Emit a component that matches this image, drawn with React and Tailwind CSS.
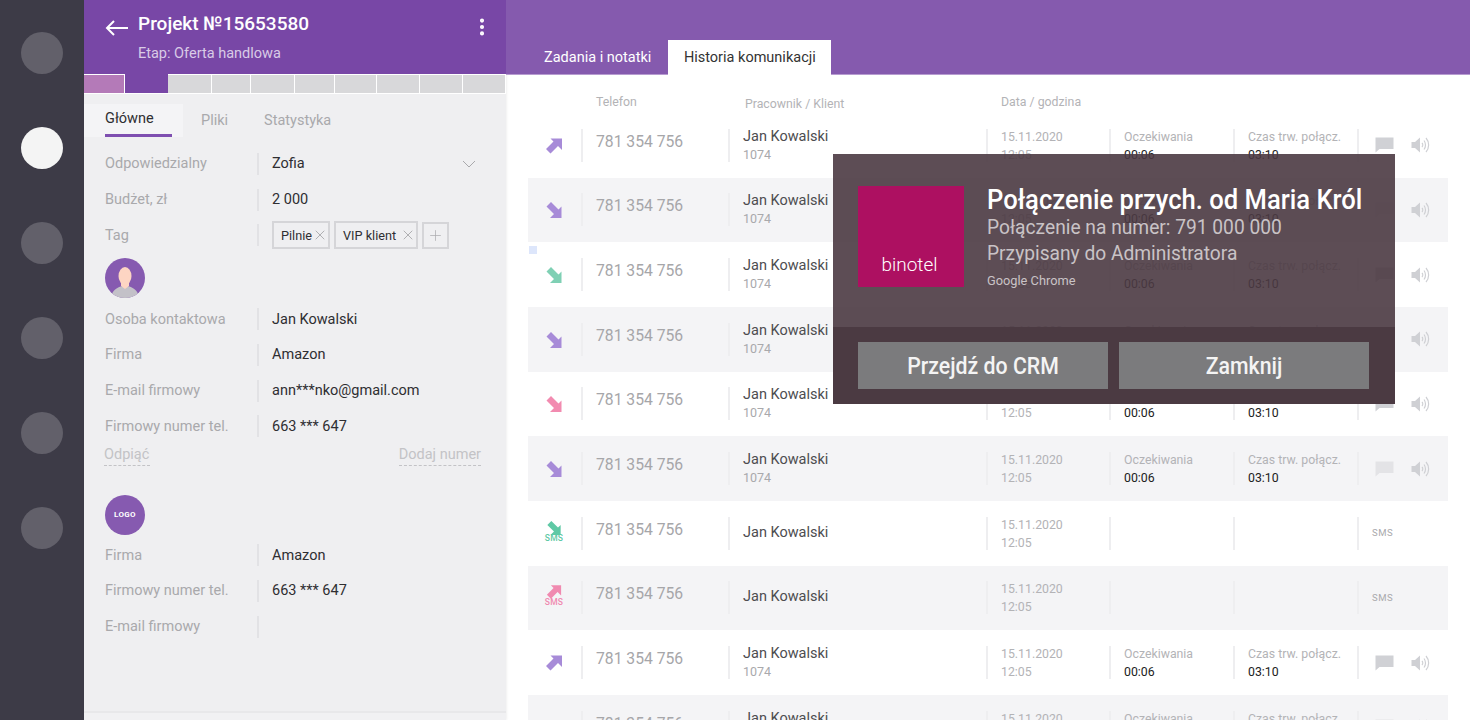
import { MoreVertical, X, Plus } from 'lucide-react'

const PURPLE = '#a78bd8'
const GREEN = '#7fd0b4'
const PINK = '#f28bb0'

const rows = [
  { dir: 'out', color: PURPLE, wait: true },
  { dir: 'in', color: PURPLE, wait: true, stripe: true },
  { dir: 'in', color: GREEN, wait: true },
  { dir: 'in', color: PURPLE, wait: true, stripe: true },
  { dir: 'in', color: PINK, wait: true },
  { dir: 'in', color: PURPLE, wait: true, stripe: true },
  { dir: 'in', color: '#5fc9a5', sms: true },
  { dir: 'out', color: '#f08ab0', sms: true, stripe: true },
  { dir: 'out', color: PURPLE, wait: true },
  { dir: 'in', color: PURPLE, wait: true, stripe: true },
]

const Arrow = ({ dir, color, size = 18, className }) => (
  <svg width={size} height={size} viewBox="0 0 18 18" className={className}>
    <path
      d="M5.5 1.5H17V13L13 9L5.5 16.5L1 12L8.5 4.5Z"
      fill={color}
      transform={dir === 'in' ? 'rotate(90 9 9)' : undefined}
    />
  </svg>
)

const Bubble = ({ fill }) => (
  <svg width="19" height="16" viewBox="0 0 19 16">
    <path d="M0.5 0.5H18.5V12H4.5L0.5 15.5Z" fill={fill} />
  </svg>
)

const Speaker = () => (
  <svg width="19" height="18" viewBox="0 0 19 18" fill="none">
    <path d="M0.5 6H4L9 1.5V16.5L4 12H0.5Z" fill="#cfd0d4" />
    <path d="M11 7C12 8 12 10 11 11" stroke="#cfd0d4" strokeWidth="1.2" />
    <path d="M13 4.5C15 7 15 11 13 13.5" stroke="#cfd0d4" strokeWidth="1.2" />
    <path d="M15 2C18.5 6 18.5 12 15 16" stroke="#cfd0d4" strokeWidth="1.2" />
  </svg>
)

const Cell = ({ className, children }) => (
  <div className={`h-[33px] shrink-0 border-l-2 border-[#eeeef0] pl-[13px] ${className}`}>{children}</div>
)

const CallRow = ({ row }) => (
  <div className={`flex h-[64.67px] shrink-0 items-center ${row.stripe ? 'bg-[#f4f4f6]' : 'bg-white'}`}>
    <div className="flex w-[53px] shrink-0 justify-center pr-[1px]">
      {row.sms ? (
        <div className="relative -mt-[3px] flex h-[24px] w-[18px] justify-center">
          <Arrow dir={row.dir} color={row.color} size={16} />
          <span className="absolute top-[13px] text-[8.5px] leading-[10px] font-medium tracking-[0.3px]" style={{ color: row.color }}>SMS</span>
        </div>
      ) : (
        <Arrow dir={row.dir} color={row.color} className="mt-[1px]" />
      )}
    </div>
    <Cell className="w-[147px]">
      <div className="pt-[3px] text-[15.7px] leading-[19px] text-[#a6a6a9]">781 354 756</div>
    </Cell>
    <Cell className="w-[258px]">
      {row.sms ? (
        <div className="pt-[6px] text-[14.5px] leading-[19px] text-[#4d4d50]">Jan Kowalski</div>
      ) : (
        <>
          <div className="-mt-[1px] text-[14.5px] leading-[18px] text-[#4d4d50]">Jan Kowalski</div>
          <div className="text-[12.5px] leading-[18px] text-[#a9a9ac]">1074</div>
        </>
      )}
    </Cell>
    <Cell className="w-[123px]">
      <div className="-mt-[1px] text-[12.3px] leading-[18px] text-[#b3b3b6]">15.11.2020</div>
      <div className="text-[12.3px] leading-[18px] text-[#b3b3b6]">12:05</div>
    </Cell>
    <Cell className="w-[124px]">
      {row.wait && (
        <>
          <div className="text-[12.3px] leading-[17px] text-[#b3b3b6]">Oczekiwania</div>
          <div className="text-[12.3px] leading-[18px] text-[#222]">00:06</div>
        </>
      )}
    </Cell>
    <Cell className="w-[124px]">
      {row.wait && (
        <>
          <div className="-mt-[1px] text-[12.3px] leading-[18px] text-[#b3b3b6]">Czas trw. połącz.</div>
          <div className="text-[12.3px] leading-[18px] text-[#222]">03:10</div>
        </>
      )}
    </Cell>
    <Cell className="flex flex-1 items-center border-[#e6e6e8]">
      {row.sms ? (
        <span className="text-[9.5px] tracking-[0.5px] text-[#a9a9ac]">SMS</span>
      ) : (
        <div className="flex items-center gap-[17px] pl-[3px]">
          <Bubble fill={row.stripe ? '#e3e3e6' : '#d0d1d5'} />
          <Speaker />
        </div>
      )}
    </Cell>
  </div>
)

const Field = ({ label, children }) => (
  <div className="flex h-[22px] items-center">
    <div className="w-[152px] shrink-0 text-[14.5px] text-[#a9a9ac]">{label}</div>
    <div className="flex h-[22px] flex-1 items-center border-l-2 border-[#e2e2e5] pl-[13px] text-[14.5px] text-[#2e2e31]">
      {children}
    </div>
  </div>
)

const Tag = ({ text, className }) => (
  <div className={`flex h-[28px] items-center justify-between border-2 border-[#d5d5d8] pl-[7px] text-[12.7px] text-[#2e2e31] ${className}`}>
    {text}
    <X size={16} strokeWidth={1} className="text-[#8f8f92]" />
  </div>
)

const ProgressBar = () => (
  <div className="flex h-[20px] shrink-0 bg-white">
    <div className="mt-[1px] mr-[1px] h-[18px] w-[40px] bg-[#b47ab8]"></div>
    <div className="h-[19px] w-[43px] bg-[#7847a6]"></div>
    <div className="flex flex-1 gap-[1px]">
      {[43, 38, 43, 39, 41, 42, 42, 42].map((w, i) => (
        <div key={i} className="mt-[1px] h-[18px] bg-[#d8d8da]" style={{ width: w }}></div>
      ))}
    </div>
  </div>
)

const LeftPanel = () => (
  <div className="flex w-[422px] shrink-0 flex-col bg-[#efeff1] shadow-[1px_0_2px_rgba(0,0,0,0.06)]">
    <div className="flex h-[74px] shrink-0 bg-[#7847a6]">
      <svg width="24" height="16" viewBox="0 0 24 16" fill="none" className="mt-[20px] ml-[21px]">
        <path d="M23 8H2M9 1L2 8L9 15" stroke="white" strokeWidth="2" />
      </svg>
      <div className="ml-[9px] flex-1 pt-[11px]">
        <div className="text-[19px] leading-[26px] font-medium text-white">Projekt №15653580</div>
        <div className="mt-[7px] text-[14.5px] leading-[20px] text-[#d9cbe6]">Etap: Oferta handlowa</div>
      </div>
      <MoreVertical size={22} strokeWidth={2.5} className="mt-[16px] mr-[13px] text-white" />
    </div>
    <ProgressBar />
    <div className="mt-[10px] flex h-[33px] shrink-0 items-start">
      <div className="relative h-[33px] w-[99px] bg-[#f4f4f6] pl-[21px] pt-[4px] text-[14.5px] text-[#2e2e31]">
        Główne
        <div className="absolute bottom-0 left-[21px] h-[3px] w-[67px] bg-[#7e4fb0]"></div>
      </div>
      <div className="ml-[18px] pt-[6px] text-[14.5px] text-[#a9a9ac]">Pliki</div>
      <div className="ml-[36px] pt-[6px] text-[14.5px] text-[#a9a9ac]">Statystyka</div>
    </div>
    <div className="flex flex-col gap-[13.7px] px-[21px] pt-[16px]">
      <Field label="Odpowiedzialny">
        Zofia
        <svg width="14" height="8" viewBox="0 0 14 8" fill="none" className="mr-[9px] ml-auto">
          <path d="M1 1L7 7L13 1" stroke="#a9a9ac" strokeWidth="1" />
        </svg>
      </Field>
      <Field label="Budżet, zł">2 000</Field>
      <Field label="Tag">
        <div className="flex items-center gap-[4px]">
          <Tag text="Pilnie" className="w-[58px]" />
          <Tag text="VIP klient" className="w-[84px]" />
          <div className="flex h-[27px] w-[27px] items-center justify-center border-2 border-[#d5d5d8]">
            <Plus size={17} strokeWidth={1} className="text-[#a9a9ac]" />
          </div>
        </div>
      </Field>
    </div>
    <div className="mt-[12px] ml-[21px] h-[40px] w-[40px] overflow-hidden rounded-full bg-[#865ab0]">
      <svg width="40" height="40" viewBox="0 0 40 40">
        <path d="M6 40C7 31 14 28 20 28C26 28 33 31 34 40Z" fill="#c3c1c8" />
        <path d="M16 24H24V28L20 31L16 28Z" fill="#fdd5c3" />
        <ellipse cx="20" cy="18" rx="6.5" ry="9" fill="#fdd5c3" />
      </svg>
    </div>
    <div className="flex flex-col gap-[13.7px] px-[21px] pt-[10px]">
      <Field label="Osoba kontaktowa">Jan Kowalski</Field>
      <Field label="Firma">Amazon</Field>
      <Field label="E-mail firmowy">ann***nko@gmail.com</Field>
      <Field label="Firmowy numer tel.">663 *** 647</Field>
    </div>
    <div className="mt-[7px] flex justify-between px-[20px] text-[14.5px] text-[#c3c3c6]">
      <span className="border-b border-dashed border-[#c3c3c6] pr-[1px] leading-[21px]">Odpiąć</span>
      <span className="mr-[5px] border-b border-dashed border-[#c3c3c6] leading-[21px]">Dodaj numer</span>
    </div>
    <div className="mt-[29px] ml-[21px] flex h-[40px] w-[40px] items-center justify-center rounded-full bg-[#865ab0] text-[8px] font-bold tracking-[0.3px] text-white">
      LOGO
    </div>
    <div className="flex flex-col gap-[13.7px] px-[21px] pt-[9px]">
      <Field label="Firma">Amazon</Field>
      <Field label="Firmowy numer tel.">663 *** 647</Field>
      <Field label="E-mail firmowy"></Field>
    </div>
    <div className="mt-auto h-[9px] border-t-2 border-[#e8e8ea] bg-[#f1f1f3]"></div>
  </div>
)

const CallPopup = () => (
  <div className="absolute top-[154px] left-[833px] flex h-[250px] w-[562px] flex-col">
    <div className="flex h-[173px] bg-[#4b3a42]/90 pt-[32px] pl-[25px]">
      <div className="flex h-[101px] w-[106px] shrink-0 items-end justify-center bg-[#ad1061] pr-[3px] pb-[10px] text-[19px] leading-[24px] font-light text-white">
        binotel
      </div>
      <div className="ml-[23px]">
        <div className="-mt-[2px] origin-left scale-y-[1.08] text-[25.6px] leading-[30px] font-medium text-white">Połączenie przych. od Maria Król</div>
        <div className="mt-[1px] scale-y-[1.08] text-[19.2px] leading-[26px] text-[#c9c3c6]">Połączenie na numer: 791 000 000</div>
        <div className="scale-y-[1.08] text-[19.2px] leading-[26px] text-[#c9c3c6]">Przypisany do Administratora</div>
        <div className="mt-[4px] text-[12.8px] leading-[20px] text-[#c9c3c6]">Google Chrome</div>
      </div>
    </div>
    <div className="flex flex-1 gap-[11px] bg-[#4b3a42] px-[25px] pt-[15px]">
      <button className="h-[47px] w-[250px] bg-[#7b7b7d] text-[21.3px] text-[#f4f4f4]"><span className="inline-block scale-y-[1.1] font-medium">Przejdź do CRM</span></button>
      <button className="h-[47px] w-[250px] bg-[#7b7b7d] text-[21.3px] text-[#f4f4f4]"><span className="inline-block scale-y-[1.1] font-medium">Zamknij</span></button>
    </div>
  </div>
)

const App = () => (
  <div className="relative flex h-[720px] w-[1470px] overflow-hidden bg-white font-['Roboto',sans-serif]">
    <div className="flex w-[84px] shrink-0 flex-col items-center gap-[53px] bg-[#3d3b47] pt-[32px]">
      {[0, 1, 2, 3, 4, 5].map((i) => (
        <div key={i} className={`h-[42px] w-[42px] rounded-full ${i === 1 ? 'bg-[#f4f4f4]' : 'bg-[#62606a]'}`}></div>
      ))}
    </div>
    <LeftPanel />
    <div className="flex min-w-0 flex-1 flex-col">
      <div className="flex h-[75px] shrink-0 items-end border-b border-[#b79cd0] bg-[#855aae] pl-[38px]">
        <div className="pb-[6px] text-[14.5px] leading-[20px] text-white">Zadania i notatki</div>
        <div className="ml-[17px] -mb-px flex h-[35px] w-[163px] items-center justify-center bg-white pt-[1px] text-[14.5px] text-[#333]">
          Historia komunikacji
        </div>
      </div>
      <div className="flex h-[38px] shrink-0 pl-[90px] text-[12.3px] text-[#b3b3b6]">
        <div className="w-[149px] pt-[18px]">Telefon</div>
        <div className="w-[256px] pt-[20px]">Pracownik / Klient</div>
        <div className="pt-[18px]">Data / godzina</div>
      </div>
      <div className="mx-[22px] flex flex-col">
        {rows.map((row, i) => (
          <CallRow key={i} row={row} />
        ))}
      </div>
    </div>
    <div className="absolute top-[246px] left-[529px] h-[8px] w-[8px] bg-[#dde6fb]"></div>
    <CallPopup />
  </div>
)

export default App
